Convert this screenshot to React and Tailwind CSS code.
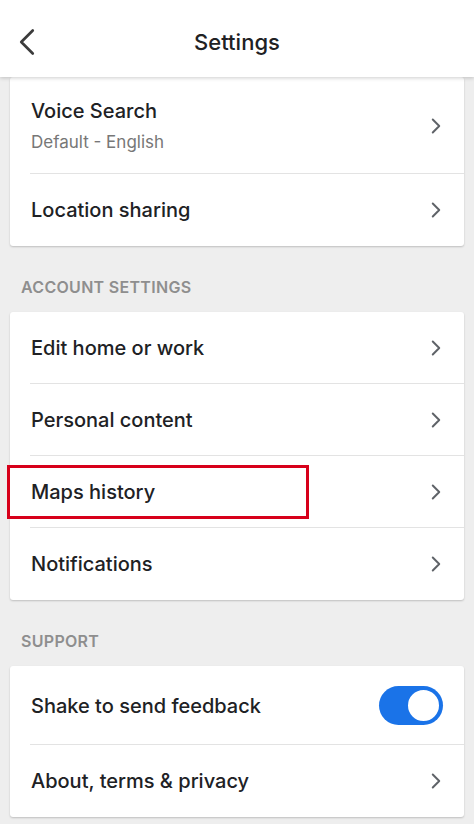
import { ChevronLeft, ChevronRight } from 'lucide-react';

const font = { fontFamily: 'Inter, "Noto Sans", sans-serif' };

function Row({ title, subtitle, last, highlight, toggle, h = 'h-[72px]' }) {
  return (
    <div className={`relative flex items-center ${h} pl-[21px] pr-[15px]`}>
      <div className="flex-1">
        <p className="text-[20px] font-medium leading-[26px] text-[#202124]">{title}</p>
        {subtitle && <p className="mt-[7px] text-[17px] leading-[22px] text-[#777]">{subtitle}</p>}
      </div>
      {toggle ? (
        <div className="mr-[6px] flex h-[39px] w-[64px] items-center justify-end rounded-full bg-[#1a73e8] pr-[2px]">
          <div className="h-[35px] w-[35px] rounded-full border-2 border-[#1a73e8] bg-white" />
        </div>
      ) : (
        <ChevronRight className="h-[26px] w-[26px] text-[#5f6368]" strokeWidth={1.8} />
      )}
      {!last && <div className="absolute bottom-0 left-[20px] right-0 h-px bg-[#e3e3e3]" />}
      {highlight && (
        <div className="absolute left-[-3px] top-[9px] h-[54px] w-[302px] border-[3px] border-[#d7001a]" />
      )}
    </div>
  );
}

function Card({ children }) {
  return <div className="mx-[10px] rounded-[3px] bg-white shadow-[0_1px_2px_rgba(0,0,0,0.2)]">{children}</div>;
}

function Heading({ children }) {
  return (
    <p className="px-[21px] pt-[31px] pb-[15px] text-[16px] font-semibold leading-[20px] tracking-[0.3px] text-[#8e8e8e]">
      {children}
    </p>
  );
}

export default function App() {
  return (
    <div className="h-[824px] w-[474px] overflow-hidden bg-[#eeeeee]" style={font}>
      <div className="relative z-10 flex h-[77px] items-center justify-center bg-white pt-[7px] shadow-[0_1px_4px_rgba(0,0,0,0.2)]">
        <ChevronLeft className="absolute left-[4px] top-[19px] h-[46px] w-[46px] text-[#3c3c3c]" strokeWidth={1.4} />
        <h1 className="text-[22px] font-medium text-[#202124]">Settings</h1>
      </div>

      <Card>
        <Row title="Voice Search" subtitle="Default - English" h="h-[97px]" />
        <Row title="Location sharing" last />
      </Card>

      <Heading>ACCOUNT SETTINGS</Heading>
      <Card>
        <Row title="Edit home or work" />
        <Row title="Personal content" />
        <Row title="Maps history" highlight />
        <Row title="Notifications" last />
      </Card>

      <Heading>SUPPORT</Heading>
      <Card>
        <Row title="Shake to send feedback" toggle h="h-[79px]" />
        <Row title="About, terms & privacy" last />
      </Card>
    </div>
  );
}
